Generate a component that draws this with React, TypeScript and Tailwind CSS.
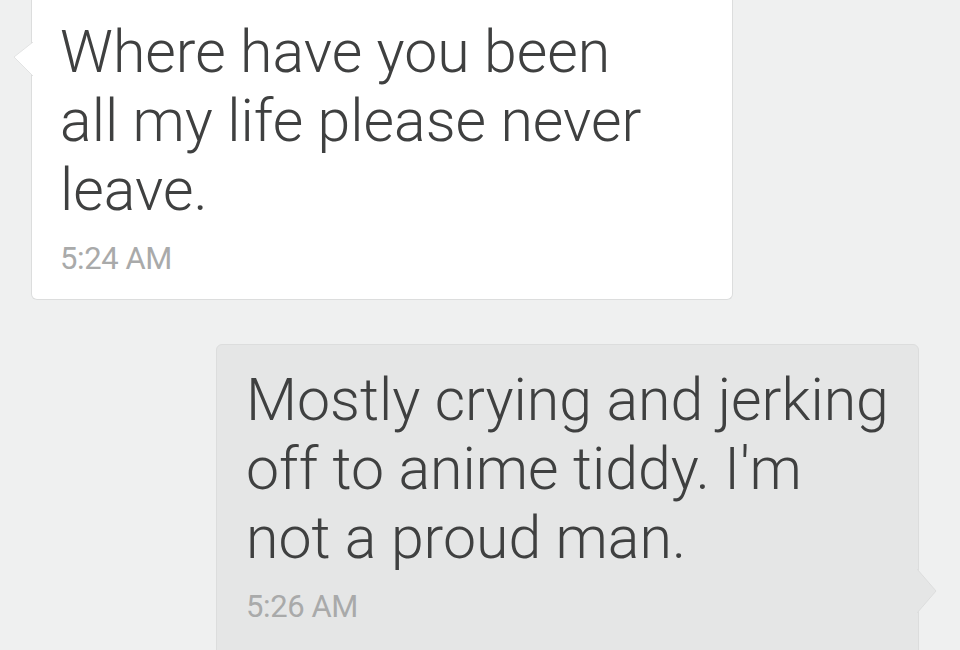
import React from "react";

interface Message {
  lines: string[];
  time: string;
  mine?: boolean;
}

const messages: Message[] = [
  {
    lines: ["Where have you been", "all my life please never", "leave."],
    time: "5:24 AM",
  },
  {
    lines: ["Mostly crying and jerking", "off to anime tiddy. I'm", "not a proud man."],
    time: "5:26 AM",
    mine: true,
  },
];

function LeftTail() {
  return (
    <svg
      className="absolute left-[-19px] top-[42px]"
      width="20"
      height="34"
      viewBox="0 0 20 34"
      aria-hidden
    >
      <polygon points="20,0 1,15 20,34" fill="#ffffff" />
      <polyline points="20,0 1,15 20,34" fill="none" stroke="#e2e3e3" strokeWidth="1" />
    </svg>
  );
}

function RightTail() {
  return (
    <svg
      className="absolute right-[-20px] top-[224px]"
      width="21"
      height="44"
      viewBox="0 0 21 44"
      aria-hidden
    >
      <polygon points="0,0 19,22 0,44" fill="#e5e6e6" />
      <polyline points="0,0 19,22 0,44" fill="none" stroke="#dcdddd" strokeWidth="1" />
    </svg>
  );
}

function Bubble({ message }: { message: Message }) {
  return (
    <div
      className={
        message.mine
          ? "relative ml-[216px] w-[703px] rounded-[6px] border border-[#dcdddd] bg-[#e5e6e6] pl-[29px] pt-[20px] pb-[40px]"
          : "relative ml-[31px] w-[702px] rounded-b-[6px] border border-t-0 border-[#dcdddd] bg-white pl-[28px] pt-[17px] pb-[21px]"
      }
    >
      {message.mine ? <RightTail /> : <LeftTail />}
      <div className="text-[59px] font-light leading-[69px] text-[#3f4040]">
        {message.lines.map((line) => (
          <div key={line} className="whitespace-nowrap">
            {line}
          </div>
        ))}
      </div>
      <div className="mt-[16px] text-[31px] leading-[38px] tracking-[-0.4px] text-[#a9aaaa]">
        {message.time}
      </div>
    </div>
  );
}

export default function App() {
  return (
    <div
      className="h-[650px] w-[960px] overflow-hidden bg-[#eff0f0]"
      style={{ fontFamily: "Roboto, 'Noto Sans', sans-serif" }}
    >
      <div className="flex flex-col gap-[44px]">
        {messages.map((m) => (
          <Bubble key={m.time} message={m} />
        ))}
      </div>
    </div>
  );
}
